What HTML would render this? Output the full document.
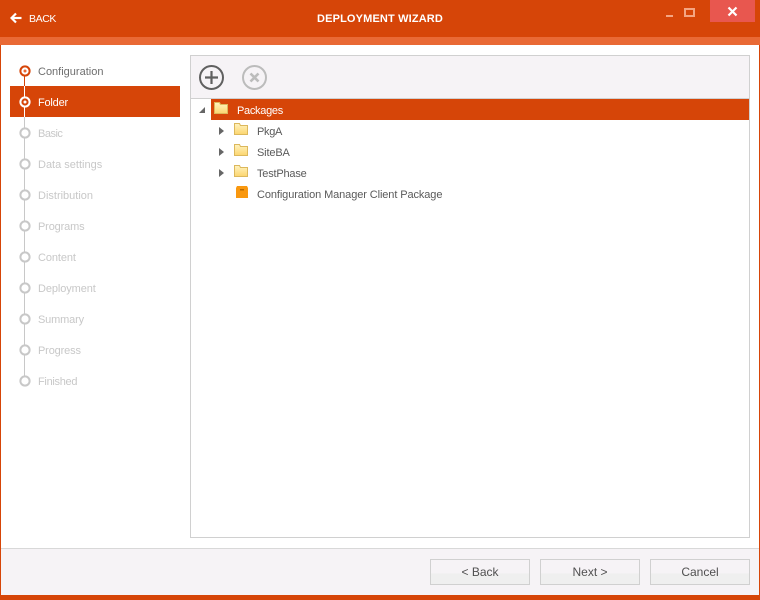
<!DOCTYPE html>
<html><head><meta charset="utf-8"><style>
html,body{margin:0;padding:0}
body{width:760px;height:600px;position:relative;overflow:hidden;background:#fff;font-family:"Liberation Sans",sans-serif;font-size:11px;color:#5a5a5a}
div,svg,span{position:absolute}
.t{white-space:nowrap;line-height:14px;height:14px}
.s{left:38px;color:#c8c8c8;letter-spacing:-.1px}
.b{top:559px;width:98px;height:24px;border:1px solid #d0d0d0;background:linear-gradient(#f6f3f6 0,#f6f3f6 55%,#efefef 56%,#efefef 100%);text-align:center;line-height:25px;font-size:12px;color:#505050}
</style></head><body>
<div style="left:0;top:0;width:760px;height:37px;background:#d64508"></div>
<div style="left:0;top:37px;width:760px;height:8px;background:#e96935"></div>
<div style="left:0;top:45px;width:1px;height:555px;background:#d64508"></div>
<div style="left:759px;top:45px;width:1px;height:555px;background:#d64508"></div>
<div style="left:0;top:595px;width:760px;height:5px;background:#d64508"></div>

<svg style="left:10px;top:12px" width="12" height="12" viewBox="0 0 12 12"><path d="M1.5 6H11.5" fill="none" stroke="#fff" stroke-width="2.2"/><path d="M6 1.5L1.5 6l4.5 4.5" fill="none" stroke="#fff" stroke-width="2.2"/></svg>
<div class="t" style="left:29px;top:12px;color:#fff;font-size:10.5px;letter-spacing:-.4px">BACK</div>
<div class="t" style="left:280px;width:200px;top:12px;color:#fff;font-weight:bold;font-size:11px;letter-spacing:.15px;text-align:center">DEPLOYMENT WIZARD</div>
<div style="left:666px;top:15px;width:7px;height:2px;background:#f4a582"></div>
<div style="left:684px;top:8px;width:7px;height:5px;border:2px solid #f4a582"></div>
<div style="left:710px;top:0;width:45px;height:22px;background:#e8574f"></div>
<svg style="left:727px;top:6px" width="11" height="11" viewBox="0 0 11 11"><path d="M1.5 1.5L9.5 9.5M9.5 1.5L1.5 9.5" stroke="#fff" stroke-width="2.2" fill="none"/></svg>

<div style="left:10px;top:86px;width:170px;height:31px;background:#d64508"></div>
<div style="left:24px;top:71px;width:1px;height:15px;background:#d64508"></div>
<div style="left:24px;top:86px;width:1px;height:31px;background:#fff"></div>
<div style="left:24px;top:117px;width:1px;height:264px;background:#c8c8c8"></div>

<svg style="left:17.6px;top:64px" width="14" height="14"><circle cx="7" cy="7" r="4.6" fill="#fff" stroke="#d64508" stroke-width="2"/><circle cx="7" cy="7" r="1.5" fill="#e96935"/></svg>
<svg style="left:17.6px;top:95px" width="14" height="14"><circle cx="7" cy="7" r="4.6" fill="#d64508" stroke="#fff" stroke-width="2"/><circle cx="7" cy="7" r="1.5" fill="#fff"/></svg>
<svg style="left:17.6px;top:126px" width="14" height="14"><circle cx="7" cy="7" r="4.6" fill="#fff" stroke="#c8c8c8" stroke-width="2"/></svg>
<svg style="left:17.6px;top:157px" width="14" height="14"><circle cx="7" cy="7" r="4.6" fill="#fff" stroke="#c8c8c8" stroke-width="2"/></svg>
<svg style="left:17.6px;top:188px" width="14" height="14"><circle cx="7" cy="7" r="4.6" fill="#fff" stroke="#c8c8c8" stroke-width="2"/></svg>
<svg style="left:17.6px;top:219px" width="14" height="14"><circle cx="7" cy="7" r="4.6" fill="#fff" stroke="#c8c8c8" stroke-width="2"/></svg>
<svg style="left:17.6px;top:250px" width="14" height="14"><circle cx="7" cy="7" r="4.6" fill="#fff" stroke="#c8c8c8" stroke-width="2"/></svg>
<svg style="left:17.6px;top:281px" width="14" height="14"><circle cx="7" cy="7" r="4.6" fill="#fff" stroke="#c8c8c8" stroke-width="2"/></svg>
<svg style="left:17.6px;top:312px" width="14" height="14"><circle cx="7" cy="7" r="4.6" fill="#fff" stroke="#c8c8c8" stroke-width="2"/></svg>
<svg style="left:17.6px;top:343px" width="14" height="14"><circle cx="7" cy="7" r="4.6" fill="#fff" stroke="#c8c8c8" stroke-width="2"/></svg>
<svg style="left:17.6px;top:374px" width="14" height="14"><circle cx="7" cy="7" r="4.6" fill="#fff" stroke="#c8c8c8" stroke-width="2"/></svg>

<div class="t s" style="top:65px;color:#6e6e6e;letter-spacing:0">Configuration</div>
<div class="t s" style="top:96px;color:#fff;letter-spacing:-.2px">Folder</div>
<div class="t s" style="top:127px;letter-spacing:-.5px">Basic</div>
<div class="t s" style="top:158px;letter-spacing:0">Data settings</div>
<div class="t s" style="top:189px;letter-spacing:0">Distribution</div>
<div class="t s" style="top:220px;letter-spacing:-.15px">Programs</div>
<div class="t s" style="top:251px">Content</div>
<div class="t s" style="top:282px">Deployment</div>
<div class="t s" style="top:313px;letter-spacing:-.15px">Summary</div>
<div class="t s" style="top:344px;letter-spacing:-.15px">Progress</div>
<div class="t s" style="top:375px;letter-spacing:-.3px">Finished</div>

<div style="left:190px;top:55px;width:558px;height:481px;border:1px solid #d0d0d0;background:#fff"></div>
<div style="left:191px;top:56px;width:558px;height:42px;background:#f6f3f6;border-bottom:1px solid #d0d0d0"></div>
<svg style="left:198px;top:63.5px" width="27" height="27" viewBox="0 0 27 27"><circle cx="13.5" cy="13.5" r="11.5" fill="none" stroke="#606060" stroke-width="2"/><path d="M13.5 7V20M7 13.5H20" stroke="#606060" stroke-width="2.2" fill="none"/></svg>
<svg style="left:240.5px;top:63.5px" width="27" height="27" viewBox="0 0 27 27"><circle cx="13.5" cy="13.5" r="11.5" fill="none" stroke="#bcbcbc" stroke-width="2"/><path d="M9.5 9.5L17.5 17.5M17.5 9.5L9.5 17.5" stroke="#bcbcbc" stroke-width="2.6" fill="none"/></svg>

<div style="left:211px;top:99px;width:538px;height:21px;background:#d64508"></div>
<svg style="left:198px;top:106px" width="8" height="8"><path d="M7 1V7H1Z" fill="#666"/></svg>
<svg style="left:214px;top:102px" width="14" height="12" viewBox="0 0 14 12"><defs><linearGradient id="g" x1="0" y1="0" x2="0" y2="1"><stop offset="0" stop-color="#fff3c0"/><stop offset="1" stop-color="#fcd56e"/></linearGradient></defs><path d="M.5 11.5V.5h5l1 2h7v9Z" fill="url(#g)" stroke="#dcb85c"/></svg>
<div class="t" style="left:237px;top:104px;color:#fff;letter-spacing:-.3px">Packages</div>

<svg style="left:219px;top:127px" width="5" height="8"><path d="M0 0L5 4L0 8Z" fill="#666"/></svg>
<svg style="left:234px;top:123px" width="14" height="12" viewBox="0 0 14 12"><path d="M.5 11.5V.5h5l1 2h7v9Z" fill="url(#g)" stroke="#dcb85c"/></svg>
<div class="t" style="left:257px;top:125px;letter-spacing:-.3px">PkgA</div>
<svg style="left:219px;top:148px" width="5" height="8"><path d="M0 0L5 4L0 8Z" fill="#666"/></svg>
<svg style="left:234px;top:144px" width="14" height="12" viewBox="0 0 14 12"><path d="M.5 11.5V.5h5l1 2h7v9Z" fill="url(#g)" stroke="#dcb85c"/></svg>
<div class="t" style="left:257px;top:146px;letter-spacing:-.15px">SiteBA</div>
<svg style="left:219px;top:169px" width="5" height="8"><path d="M0 0L5 4L0 8Z" fill="#666"/></svg>
<svg style="left:234px;top:165px" width="14" height="12" viewBox="0 0 14 12"><path d="M.5 11.5V.5h5l1 2h7v9Z" fill="url(#g)" stroke="#dcb85c"/></svg>
<div class="t" style="left:257px;top:167px;letter-spacing:-.2px">TestPhase</div>
<svg style="left:236px;top:186px" width="12" height="12" viewBox="0 0 12 12"><path d="M1 0H11L12 2V12H0V2Z" fill="#f9980f"/><rect x="4" y="3" width="4" height="1.5" fill="#b96a00"/></svg>
<div class="t" style="left:257px;top:188px;letter-spacing:-.1px">Configuration Manager Client Package</div>

<div style="left:1px;top:548px;width:758px;height:47px;background:#f6f3f6;border-top:1px solid #d8d8d8;box-sizing:border-box"></div>
<div class="b" style="left:430px">&lt; Back</div>
<div class="b" style="left:540px">Next &gt;</div>
<div class="b" style="left:650px">Cancel</div>
</body></html>
